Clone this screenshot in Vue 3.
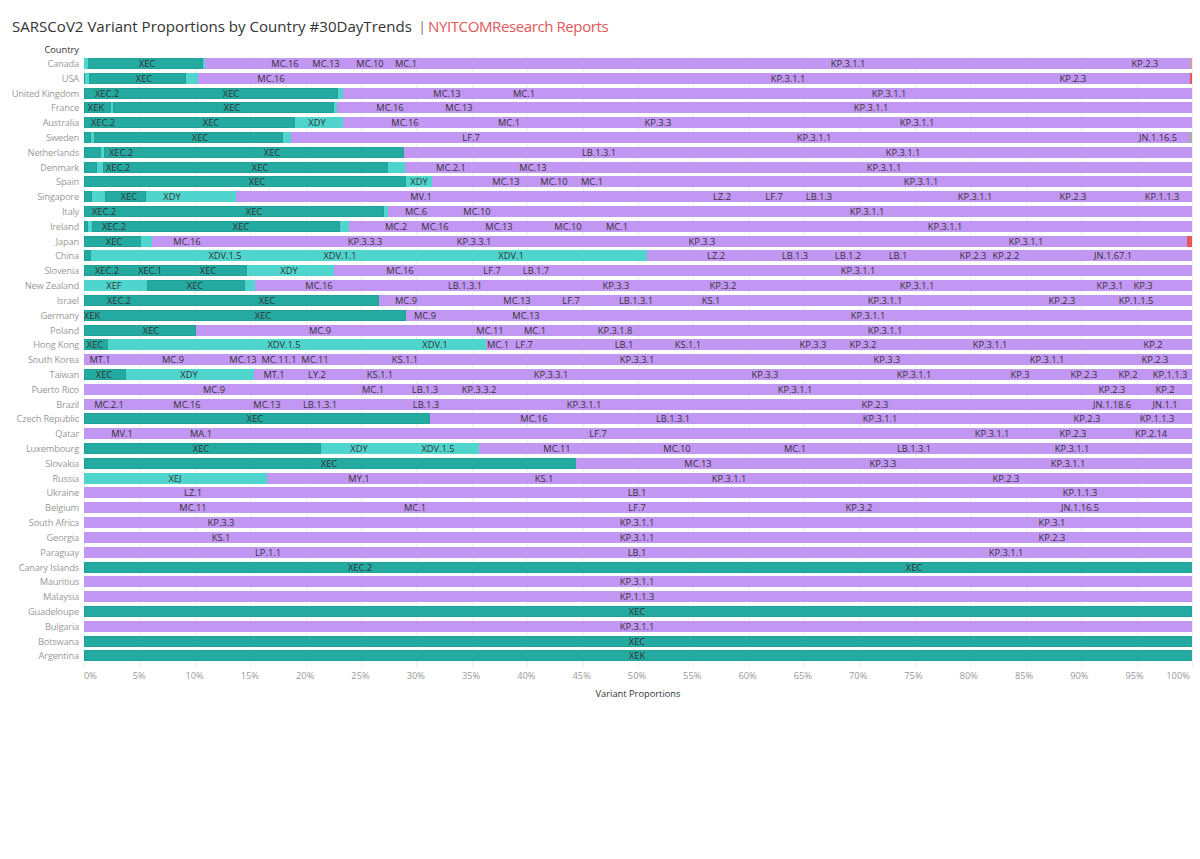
<script setup>
const START = 84
const WIDTH = 1108

// segments are [right edge in px, colour], the rest of the bar is purple
const data = [
  ['Canada', [[88, 'l'], [203, 'd'], [205.5, 'l'], [1191, 'p'], [1192, 'o']], 'XEC 147,MC.16 285,MC.13 326,MC.10 370,MC.1 406,KP.3.1.1 848,KP.2.3 1145'],
  ['USA', [[85.5, 'd'], [89.5, 'l'], [186, 'd'], [198, 'l'], [1190.5, 'p'], [1192, 'r']], 'XEC 144,MC.16 271,KP.3.1.1 788,KP.2.3 1073'],
  ['United Kingdom', [[337.5, 'd'], [343.5, 'l']], 'XEC.2 107,XEC 231,MC.13 447,MC.1 524,KP.3.1.1 889'],
  ['France', [[111, 'd'], [113, 'l'], [334, 'd'], [337, 'l']], 'XEK 96,XEC 232,MC.16 390,MC.13 459,KP.3.1.1 871'],
  ['Australia', [[295, 'd'], [343, 'l']], 'XEC.2 103,XEC 211,XDY 317,MC.16 405,MC.1 509,KP.3.3 658,KP.3.1.1 917'],
  ['Sweden', [[91, 'd'], [94, 'l'], [283.5, 'd'], [291, 'l'], [1189.5, 'p'], [1192, 'g']], 'XEC 200,LF.7 471,KP.3.1.1 814,JN.1.16.5 1158'],
  ['Netherlands', [[101, 'd'], [104, 'l'], [404, 'd']], 'XEC.2 121,XEC 272,LB.1.3.1 599,KP.3.1.1 903'],
  ['Denmark', [[97, 'd'], [103, 'l'], [388, 'd'], [405, 'l']], 'XEC.2 118,XEC 260,MC.2.1 451,MC.13 533,KP.3.1.1 884'],
  ['Spain', [[405.5, 'd'], [432, 'l']], 'XEC 257,XDY 419,MC.13 506,MC.10 554,MC.1 592,KP.3.1.1 921'],
  ['Singapore', [[92, 'd'], [105.5, 'l'], [146, 'd'], [236, 'l']], 'XEC 129,XDY 172,MV.1 421,LZ.2 722,LF.7 774,LB.1.3 819,KP.3.1.1 975,KP.2.3 1073,KP.1.1.3 1162'],
  ['Italy', [[384, 'd'], [388, 'l']], 'XEC.2 104,XEC 254,MC.6 416,MC.10 477,KP.3.1.1 867'],
  ['Ireland', [[88, 'd'], [92, 'l'], [340, 'd'], [349.5, 'l']], 'XEC.2 114,XEC 241,MC.2 396,MC.16 435,MC.13 499,MC.10 568,MC.1 617,KP.3.1.1 945'],
  ['Japan', [[141, 'd'], [151.5, 'l'], [1186.5, 'p'], [1192, 'r']], 'XEC 114,MC.16 187,KP.3.3.3 365,KP.3.3.1 474,KP.3.3 702,KP.3.1.1 1026'],
  ['China', [[91, 'd'], [647, 'l']], 'XDV.1.5 225,XDV.1.1 340,XDV.1 511,LZ.2 716,LB.1.3 795,LB.1.2 848,LB.1 898,KP.2.3 973,KP.2.2 1006,JN.1.67.1 1113'],
  ['Slovenia', [[247, 'd'], [334, 'l']], 'XEC.2 107,XEC.1 150,XEC 208,XDY 289,MC.16 400,LF.7 492,LB.1.7 536,KP.3.1.1 858'],
  ['New Zealand', [[147.5, 'l'], [245, 'd'], [255, 'l']], 'XEF 114,XEC 195,MC.16 319,LB.1.3.1 465,KP.3.3 616,KP.3.2 723,KP.3.1.1 917,KP.3.1 1110,KP.3 1143'],
  ['Israel', [[379, 'd']], 'XEC.2 119,XEC 267,MC.9 406,MC.13 517,LF.7 571,LB.1.3.1 636,KS.1 711,KP.3.1.1 885,KP.2.3 1062,KP.1.1.5 1136'],
  ['Germany', [[406, 'd']], 'XEK 92,XEC 263,MC.9 425,MC.13 526,KP.3.1.1 868'],
  ['Poland', [[196, 'd']], 'XEC 151,MC.9 320,MC.11 490,MC.1 535,KP.3.1.8 615,KP.3.1.1 885'],
  ['Hong Kong', [[108, 'd'], [486, 'l']], 'XEC 95,XDV.1.5 284,XDV.1 435,MC.1 498,LF.7 524,LB.1 624,KS.1.1 688,KP.3.3 813,KP.3.2 863,KP.3.1.1 990,KP.2 1153'],
  ['South Korea', [], 'MT.1 100,MC.9 173,MC.13 243,MC.11.1 279,MC.11 315,KS.1.1 405,KP.3.3.1 637,KP.3.3 887,KP.3.1.1 1047,KP.2.3 1155'],
  ['Taiwan', [[126, 'd'], [253.5, 'l']], 'XEC 104,XDY 189,MT.1 274,LY.2 317,KS.1.1 380,KP.3.3.1 551,KP.3.3 765,KP.3.1.1 914,KP.3 1020,KP.2.3 1084,KP.2 1128,KP.1.1.3 1170'],
  ['Puerto Rico', [], 'MC.9 214,MC.1 373,LB.1.3 425,KP.3.3.2 479,KP.3.1.1 795,KP.2.3 1112,KP.2 1165'],
  ['Brazil', [], 'MC.2.1 109,MC.16 187,MC.13 267,LB.1.3.1 320,LB.1.3 426,KP.3.1.1 584,KP.2.3 875,JN.1.18.6 1112,JN.1.1 1165'],
  ['Czech Republic', [[430, 'd']], 'XEC 255,MC.16 534,LB.1.3.1 673,KP.3.1.1 880,KP.2.3 1087,KP.1.1.3 1157'],
  ['Qatar', [], 'MV.1 122,MA.1 201,LF.7 598,KP.3.1.1 992,KP.2.3 1073,KP.2.14 1151'],
  ['Luxembourg', [[321, 'd'], [479, 'l']], 'XEC 201,XDY 359,XDV.1.5 438,MC.11 557,MC.10 677,MC.1 795,LB.1.3.1 914,KP.3.1.1 1072'],
  ['Slovakia', [[576, 'd']], 'XEC 329,MC.13 698,KP.3.3 883,KP.3.1.1 1068'],
  ['Russia', [[267, 'l']], 'XEJ 175,MY.1 359,KS.1 544,KP.3.1.1 729,KP.2.3 1006'],
  ['Ukraine', [], 'LZ.1 193,LB.1 637,KP.1.1.3 1080'],
  ['Belgium', [], 'MC.11 193,MC.1 415,LF.7 637,KP.3.2 859,JN.1.16.5 1080'],
  ['South Africa', [], 'KP.3.3 221,KP.3.1.1 637,KP.3.1 1052'],
  ['Georgia', [], 'KS.1 221,KP.3.1.1 637,KP.2.3 1052'],
  ['Paraguay', [], 'LP.1.1 268,LB.1 637,KP.3.1.1 1006'],
  ['Canary Islands', [[1192, 'd']], 'XEC.2 360,XEC 914'],
  ['Mauritius', [], 'KP.3.1.1 637'],
  ['Malaysia', [], 'KP.1.1.3 637'],
  ['Guadeloupe', [[1192, 'd']], 'XEC 637'],
  ['Bulgaria', [], 'KP.3.1.1 637'],
  ['Botswana', [[1192, 'd']], 'XEC 637'],
  ['Argentina', [[1192, 'd']], 'XEK 637'],
]

const pct = (x) => ((x - START) / WIDTH) * 100

const rows = data.map(([name, edges, text]) => {
  let prev = START
  const segs = edges.map(([end, color]) => {
    const seg = { color, width: pct(end) - pct(prev) }
    prev = end
    return seg
  })
  const labels = text.split(',').map((item) => {
    const [label, x] = item.split(' ')
    return { label, left: pct(Number(x)) }
  })
  return { name, segs, labels }
})

const ticks = Array.from({ length: 21 }, (_, i) => i * 5)
</script>

<template>
  <div class="page">
    <h1 class="title">
      <span>SARSCoV2 Variant Proportions by Country #30DayTrends</span>
      <span class="sep">|</span>
      <span class="report">NYITCOMResearch Reports</span>
    </h1>

    <div class="field-head">Country</div>

    <div class="chart">
      <div v-for="row in rows" :key="row.name" class="row">
        <div class="country">{{ row.name }}</div>
        <div class="bar">
          <div
            v-for="(seg, i) in row.segs"
            :key="i"
            class="seg"
            :class="seg.color"
            :style="{ width: seg.width + '%' }"
          ></div>
          <span
            v-for="item in row.labels"
            :key="item.label + item.left"
            class="mark"
            :style="{ left: item.left + '%' }"
          >{{ item.label }}</span>
        </div>
      </div>
    </div>

    <div class="axis">
      <span v-for="t in ticks" :key="t" class="tick">{{ t }}%</span>
    </div>
    <div class="axis-title">Variant Proportions</div>
  </div>
</template>

<style scoped>
.page {
  width: 1200px;
  height: 859px;
  overflow: hidden;
  background: #fff;
  font-family: "Open Sans", "Noto Sans", sans-serif;
  color: #333;
}
.title {
  display: flex;
  align-items: center;
  margin: 0;
  padding: 14px 0 0 12px;
  height: 24px;
  font-size: 15.07px;
  line-height: 23px;
  font-weight: 400;
  color: #333;
  white-space: nowrap;
}
.sep {
  margin: 0 2px 0 6px;
  font-weight: 300;
}
.report {
  color: #e15759;
  letter-spacing: -0.43px;
}
.field-head {
  width: 79px;
  margin-top: 5px;
  text-align: right;
  font-size: 9.3px;
  line-height: 13px;
  color: #333;
}
.chart {
  padding-bottom: 5px;
  /* faint vertical gridlines every 5% */
  background-image: repeating-linear-gradient(
    to right,
    #eee 0,
    #eee 1px,
    transparent 1px,
    transparent 55.4px
  );
  background-position: 84px 0;
  background-size: 1109px 100%;
  background-repeat: no-repeat;
}
.row {
  display: flex;
  align-items: center;
  height: 14.825px;
}
.country {
  width: 79px;
  flex: none;
  margin-right: 5px;
  text-align: right;
  font-size: 9.3px;
  letter-spacing: -0.2px;
  color: #999;
  white-space: nowrap;
}
.bar {
  position: relative;
  display: flex;
  flex: none;
  width: 1108px;
  height: 11px;
  background: #c296f3;
}
.seg {
  height: 100%;
}
.seg.d {
  background: #25aaa1;
  box-shadow: inset 0 0 0 1px rgba(20, 130, 120, 0.2);
}
.seg.l {
  background: #4fd5cd;
}
.seg.p {
  background: #c296f3;
}
.seg.o {
  background: #f0a05a;
}
.seg.r {
  background: #e8565a;
}
.seg.g {
  background: #aaa;
}
.mark {
  position: absolute;
  top: 0;
  transform: translateX(-50%);
  font-size: 9.3px;
  line-height: 11px;
  color: #333;
  white-space: nowrap;
}
.axis {
  display: flex;
  justify-content: space-between;
  margin: 0 8px 0 84px;
  height: 16px;
  font-size: 9.3px;
  line-height: 16px;
  color: #999;
}
.tick {
  width: 0;
  display: flex;
  justify-content: center;
  white-space: nowrap;
}
.tick:first-child {
  justify-content: flex-start;
}
.tick:last-child {
  justify-content: flex-end;
  padding-right: 2px;
}
.axis-title {
  margin-left: 84px;
  width: 1108px;
  padding-top: 2px;
  text-align: center;
  font-size: 9.3px;
  line-height: 15px;
  color: #333;
}
</style>
